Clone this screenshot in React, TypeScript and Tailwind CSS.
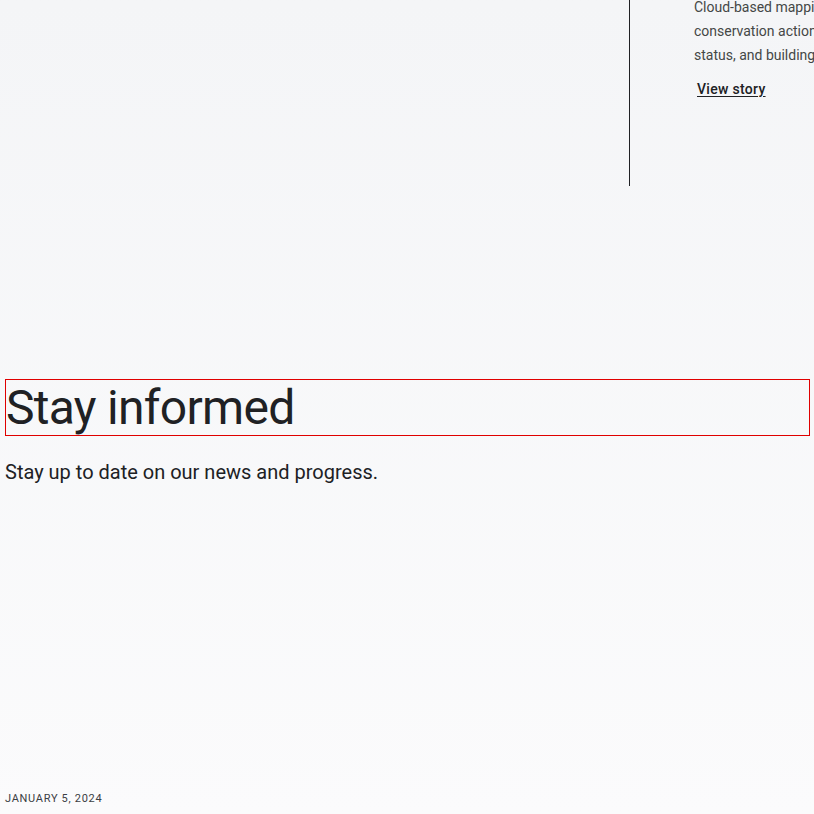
export default function App() {
  return (
    <div
      className="h-[814px] w-[814px] overflow-hidden bg-gradient-to-b from-[#f4f5f7] to-[#fbfbfc] text-[#202124]"
      style={{ fontFamily: "Roboto, 'Noto Sans', sans-serif" }}
    >
      {/* story row, scrolled so its top is cut off */}
      <section className="flex h-[186px]">
        <div className="w-[629px] shrink-0" />
        <div className="w-px shrink-0 bg-[#202124]" />
        <div className="shrink-0 pl-[64px]">
          <p className="-mt-[5px] w-[420px] text-[14px] leading-[24px] text-[#444746]">
            Cloud-based mapping tools help guide
            <br />
            conservation action by tracking species
            <br />
            status, and building shared knowledge.
          </p>
          <a
            href="#"
            className="mt-[12px] ml-[3px] inline-block text-[14px] leading-[20px] font-medium tracking-[0.3px] text-[#202124] underline underline-offset-2"
          >
            View story
          </a>
        </div>
      </section>

      <section className="px-[5px] pt-[193px]">
        <h2 className="mr-[-1px] border border-[#e00000] text-[48px] leading-[55px] font-normal tracking-[-0.7px]">
          Stay informed
        </h2>
        <p className="mt-[22px] text-[20px] leading-[28px] text-[#202124]">
          Stay up to date on our news and progress.
        </p>
      </section>

      <section className="px-[5px] pt-[305px]">
        <p className="text-[11px] leading-[16px] tracking-[0.7px] font-normal text-[#3c4043] uppercase">
          January 5, 2024
        </p>
      </section>
    </div>
  );
}
